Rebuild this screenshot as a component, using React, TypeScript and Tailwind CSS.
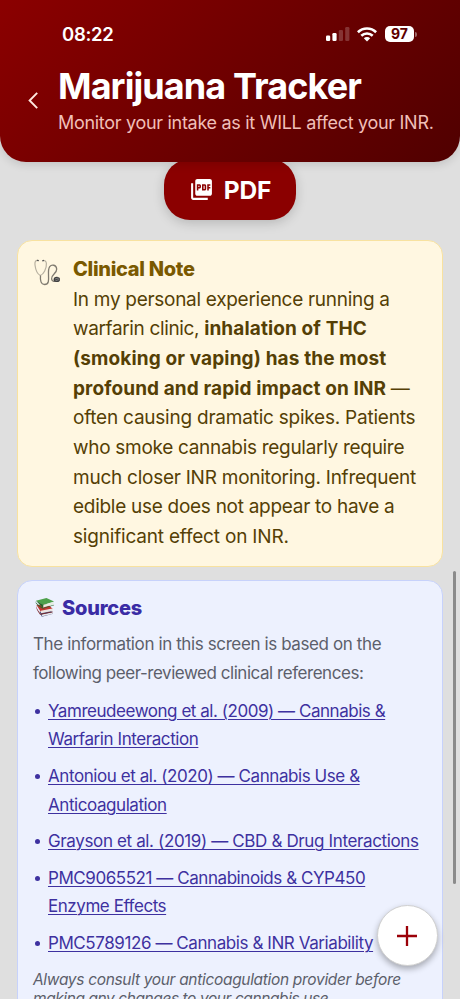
import React from "react";
import { MdPictureAsPdf } from "react-icons/md";

function StatusBar() {
  return (
    <div className="flex h-[20px] items-center pl-[62px] pr-[43px] text-white">
      <span className="text-[18.5px] font-semibold leading-[20px] tracking-[-0.3px]">08:22</span>
      <svg className="ml-auto" width="24" height="16" viewBox="0 0 24 16">
        <rect x="0" y="9.5" width="4.2" height="5.5" rx="1.2" fill="#fff" />
        <rect x="6.4" y="7" width="4.2" height="8" rx="1.2" fill="#fff" />
        <rect x="12.8" y="4" width="4.2" height="11" rx="1.2" fill="#fff" opacity=".2" />
        <rect x="19.2" y="1" width="4.2" height="14" rx="1.2" fill="#fff" opacity=".2" />
      </svg>
      <svg className="ml-[7px]" width="20" height="15" viewBox="0 0 20 15">
        <g fill="none" stroke="#fff" strokeWidth="2.6">
          <path d="M0.9 5.2 A13 13 0 0 1 19.1 5.2" />
          <path d="M4.3 8.8 A8.2 8.2 0 0 1 15.7 8.8" />
        </g>
        <path d="M6.8 11.3 A4.6 4.6 0 0 1 13.2 11.3 L10 14.6 Z" fill="#fff" />
      </svg>
      <div className="ml-[8px] flex h-[16px] w-[29px] items-center justify-center rounded-[5px] bg-white text-[14px] font-bold leading-none text-[#5e0000]">
        97
      </div>
      <div className="ml-[1px] h-[5px] w-[2px] rounded-r-full bg-white/40" />
    </div>
  );
}

function Stethoscope() {
  return (
    <svg className="mt-[18px] shrink-0" width="27" height="27" viewBox="0 0 27 27" fill="none">
      <path d="M4.2 1.5 C1.5 1 .6 3 1 6 C1.5 10 3.2 15 6.3 16.5 C9.6 15.5 12.7 9.5 12.4 4.5 C12.2 1.8 10.8 1.2 8.8 1.6" stroke="#b7b0a0" strokeWidth="1.2" />
      <path d="M6.5 16.5 C6 21.5 7 25.5 10.6 25.5 C18.2 25.5 12 12.5 15.7 7.6 C17.7 5 22.3 5.8 22.7 10 C23 14.5 17 15.5 17.6 19.8 C18 22.3 20 22.8 22 22" stroke="#807b70" strokeWidth="1.3" />
      <path d="M3 1.3 L4.8 1.7 M8.3 1.8 L10 1.3" stroke="#555" strokeWidth="1.2" />
      <ellipse cx="22.8" cy="20.4" rx="3.2" ry="2.7" fill="#3f3f3f" />
      <path d="M21 20 L25 18.8 M21.4 21.8 L25.3 20.5" stroke="#aaa" strokeWidth=".6" />
    </svg>
  );
}

function Books() {
  return (
    <svg className="ml-[2px] shrink-0" width="20" height="21" viewBox="0 0 21 21">
      <path d="M4.5 15 L16.8 14 L19 17 L7.2 20.2 Z" fill="#4c5684" />
      <path d="M7.2 17.8 L18.6 15.6 L18.6 17.3 L7.4 19.8 Z" fill="#e6e6ea" />
      <path d="M1.6 8 L14 7 L18.5 12.2 L6 15 Z" fill="#c1352f" />
      <path d="M6 14 L18.2 11.6 L18.2 14.2 L6.4 16.6 Z" fill="#ece5e2" />
      <path d="M1.6 8 C.9 10 2.4 12.8 5.6 17 L18.5 14.6 L18.5 15.4 L5.4 18 C2 14 .6 10.5 1.6 8 Z" fill="#7c2526" />
      <path d="M1 3.3 L12 .6 L20 4.2 L8.6 8 Z" fill="#4da04b" />
      <path d="M8.6 8 L19.6 4.6 L19.4 7.4 L8.6 10.4 Z" fill="#e5ece2" />
      <path d="M1 3.3 C.4 5.2 1.5 6.2 8.4 10.9 L20 7.6 L20 8.2 L8.4 11.8 C1 7.6 .1 5.6 1 3.3 L8.7 7.5 L8.4 10.9 Z" fill="#27672e" />
    </svg>
  );
}

function Source({ lines }: { lines: { text: string; cls: string }[] }) {
  return (
    <li className="flex">
      <span className="ml-[2px] mr-[8px] mt-[12px] h-[5px] w-[5px] shrink-0 rounded-full bg-[#3e31a0]" />
      <a>
        {lines.map((l) => (
          <span key={l.text} className={"block w-max whitespace-nowrap underline decoration-1 underline-offset-[2px] " + l.cls}>
            {l.text}
          </span>
        ))}
      </a>
    </li>
  );
}

export default function App() {
  return (
    <div className="relative h-[999px] w-[460px] overflow-hidden bg-[#dfdfdf] font-['Inter',sans-serif]">
      <header className="relative z-10 h-[162px] rounded-b-[26px] bg-[linear-gradient(135deg,#8b0000_0%,#500000_100%)] pt-[24px] shadow-[0_3px_8px_rgba(0,0,0,0.12)]">
        <StatusBar />
        <div className="flex pt-[20px]">
          <svg className="ml-[28px] mt-[28px] shrink-0" width="11" height="17" viewBox="0 0 11 17" fill="none">
            <path d="M9.2 .8 L1.6 8.5 L9.2 16.2" stroke="#ffe9e0" strokeWidth="1.9" />
          </svg>
          <div className="ml-[19px] whitespace-nowrap">
            <h1 className="text-[36px] font-bold leading-[44px] tracking-[-0.91px] text-white">Marijuana Tracker</h1>
            <p className="mt-[3px] text-[18px] leading-[24px] tracking-[-0.3px] text-[#f0bfb8]">Monitor your intake as it WILL affect your INR.</p>
          </div>
        </div>
      </header>

      <div className="mx-auto -mt-[3px] flex h-[61px] w-[132px] items-center justify-center gap-[10px] rounded-[26px] bg-[#8b0000] text-white shadow-[0_3px_12px_rgba(0,0,0,0.18)]">
        <MdPictureAsPdf size={25} />
        <span className="pt-[1px] text-[24.5px] font-bold leading-none tracking-[-0.2px]">PDF</span>
      </div>

      <section className="mx-[17px] mt-[20px] flex h-[327px] rounded-[15px] border-[1.5px] border-[#f8e2a0] bg-[#fff7e1] pl-[16px]">
        <Stethoscope />
        <div className="ml-[12px] whitespace-nowrap pt-[13px] text-[19px] leading-[29.7px] text-[#553f05]">
          <h2 className="text-[20px] font-extrabold leading-[30.5px] tracking-[-0.3px] text-[#7a5900]">Clinical Note</h2>
          <p>
            <span className="block w-max tracking-[-0.29px]">In my personal experience running a</span>
            <span className="block w-max tracking-[-0.36px]">warfarin clinic, <b className="tracking-[0.12px]">inhalation of THC</b></span>
            <b className="block w-max tracking-[0.13px]">(smoking or vaping) has the most</b>
            <span className="block w-max"><b className="tracking-[0.1px]">profound and rapid impact on INR</b><span className="tracking-[-0.7px]"> —</span></span>
            <span className="block w-max tracking-[-0.23px]">often causing dramatic spikes. Patients</span>
            <span className="block w-max tracking-[-0.3px]">who smoke cannabis regularly require</span>
            <span className="block w-max tracking-[-0.25px]">much closer INR monitoring. Infrequent</span>
            <span className="block w-max tracking-[-0.28px]">edible use does not appear to have a</span>
            <span className="block w-max tracking-[-0.19px]">significant effect on INR.</span>
          </p>
        </div>
      </section>

      <section className="mx-[17px] mt-[13px] h-[440px] whitespace-nowrap rounded-[15px] border border-[#c7d2fb] bg-[#edf1fe] px-[15px] pt-[12px]">
        <h2 className="flex h-[29px] items-center gap-[7px] text-[20px] font-extrabold tracking-[-0.2px] text-[#3a2ca5]">
          <Books />
          Sources
        </h2>
        <p className="mt-[8px] text-[17px] leading-[28.8px] text-[#5c5f6b]">
          <span className="block w-max tracking-[-0.39px]">The information in this screen is based on the</span>
          <span className="block w-max tracking-[-0.46px]">following peer-reviewed clinical references:</span>
        </p>
        <ul className="mt-[9px] flex flex-col gap-[7.7px] text-[17px] leading-[28.8px] text-[#3e31a0]">
          <Source lines={[{ text: "Yamreudeewong et al. (2009) — Cannabis &", cls: "tracking-[-0.46px]" }, { text: "Warfarin Interaction", cls: "tracking-[-0.42px]" }]} />
          <Source lines={[{ text: "Antoniou et al. (2020) — Cannabis Use &", cls: "tracking-[-0.43px]" }, { text: "Anticoagulation", cls: "tracking-[-0.43px]" }]} />
          <Source lines={[{ text: "Grayson et al. (2019) — CBD & Drug Interactions", cls: "tracking-[-0.365px]" }]} />
          <Source lines={[{ text: "PMC9065521 — Cannabinoids & CYP450", cls: "tracking-[-0.44px]" }, { text: "Enzyme Effects", cls: "tracking-[-0.45px]" }]} />
          <Source lines={[{ text: "PMC5789126 — Cannabis & INR Variability", cls: "tracking-[-0.42px]" }]} />
        </ul>
        <p className="mt-[12px] text-[15.5px] italic leading-[19px] text-[#5c5f6b]">
          <span className="block w-max tracking-[-0.32px]">Always consult your anticoagulation provider before</span>
          <span className="block w-max tracking-[-0.42px]">making any changes to your cannabis use.</span>
        </p>
      </section>

      <div className="absolute left-[453px] top-[571px] h-[313px] w-[3px] rounded-full bg-[#8b8b8b]" />
      <button className="absolute left-[377px] top-[905px] flex h-[61px] w-[61px] items-center justify-center rounded-full border border-[#d0d0d0] bg-white pr-[1px] shadow-[0_3px_6px_rgba(0,0,0,0.3)]">
        <svg width="20" height="20" viewBox="0 0 20 20">
          <path d="M10 0 V20 M0 10 H20" stroke="#9b0008" strokeWidth="2.3" />
        </svg>
      </button>
    </div>
  );
}
